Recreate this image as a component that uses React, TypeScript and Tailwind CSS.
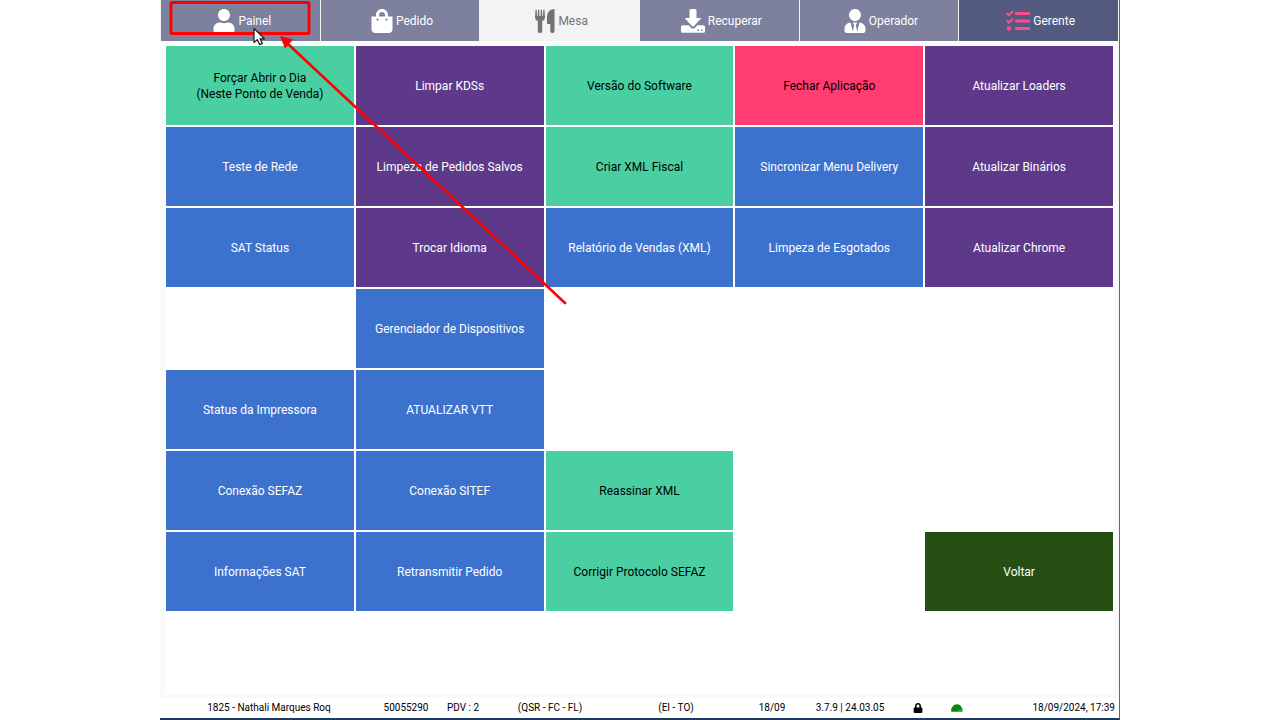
import type { ReactNode } from "react";
import { FaLock, FaShoppingBag, FaTasks, FaUser, FaUserTie } from "react-icons/fa";

function CutleryIcon() {
  return (
    <svg viewBox="0 0 20 24" className="h-6 w-5" fill="currentColor" aria-hidden="true">
      <path d="M0.5 1Q1 0 1.7 1L2 7H2.7L3 1Q3.7 0 4.2 1L4.4 7H5.6L5.8 1Q6.3 0 7 1L7.3 7H8L8.3 1Q9 0 9.5 1L10 8.5Q10 11 7.2 12V22.5Q7.2 24 5 24T2.8 22.5V12Q0 11 0 8.5Z" />
      <path d="M19.5 0.6V22.5Q19.5 24 17.5 24T15.3 22.5V15H12.6Q12 15 12 14.3V7Q12.6 1 18.8 0Q19.5 0 19.5 0.6Z" />
    </svg>
  );
}

function DownloadIcon() {
  return (
    <svg viewBox="0 0 24 24" className="size-6" fill="currentColor" aria-hidden="true">
      <path d="M10 0H14Q15.5 0 15.5 1.5V9H19.2Q20.6 9 19.6 10L12.8 17.2Q12 18 11.2 17.2L4.4 10Q3.4 9 4.8 9H8.5V1.5Q8.5 0 10 0Z" />
      <path
        fillRule="evenodd"
        d="M1.5 16.3H7.6L10.3 19Q12 20.5 13.7 19L16.4 16.3H22.5Q24 16.3 24 17.8V22.2Q24 23.7 22.5 23.7H1.5Q0 23.7 0 22.2V17.8Q0 16.3 1.5 16.3ZM16.5 20.5V22H18V20.5ZM19.8 20.5V22H21.3V20.5Z"
      />
    </svg>
  );
}

function DomeIcon() {
  return (
    <svg viewBox="0 0 12 8" className="h-2 w-3 text-[#008a12]" role="img" aria-label="Conectado">
      <path fill="currentColor" d="M0.5 7.8Q-0.4 5 1 3.4Q2.8 0.3 6 0.3Q9.3 0.3 10.6 3.4Q12.2 5.4 11.4 7.8Z" />
      <path stroke="#b9e2bd" strokeWidth="0.7" fill="none" d="M7.5 6l0.8 1.2M9.6 5.6l0.8 1.2" />
    </svg>
  );
}

type Tab = { label: string; icon: ReactNode; tone: string };

const tabs: Tab[] = [
  { label: "Painel", icon: <FaUser className="h-6 w-[22px]" />, tone: "bg-[#7d819d] text-white" },
  { label: "Pedido", icon: <FaShoppingBag className="h-6 w-[22px]" />, tone: "bg-[#7d819d] text-white" },
  { label: "Mesa", icon: <CutleryIcon />, tone: "bg-[#f3f3f3] text-[#737373]" },
  { label: "Recuperar", icon: <DownloadIcon />, tone: "bg-[#7d819d] text-white" },
  { label: "Operador", icon: <FaUserTie className="h-6 w-[22px]" />, tone: "bg-[#7d819d] text-white" },
  { label: "Gerente", icon: <FaTasks className="size-6 text-[#ff4b8b]" />, tone: "bg-[#525a80] text-white" },
];

const green = "bg-[#4acfa3] text-black";
const purple = "bg-[#5e398a] text-white";
const blue = "bg-[#3c72cd] text-white";
const pink = "bg-[#ff3d70] text-black";
const forest = "bg-[#274e13] text-white";

type Cell = [label: string, tone: string] | null;

const cells: Cell[] = [
  ["Forçar Abrir o Dia\n(Neste Ponto de Venda)", green],
  ["Limpar KDSs", purple],
  ["Versão do Software", green],
  ["Fechar Aplicação", pink],
  ["Atualizar Loaders", purple],
  ["Teste de Rede", blue],
  ["Limpeza de Pedidos Salvos", purple],
  ["Criar XML Fiscal", green],
  ["Sincronizar Menu Delivery", blue],
  ["Atualizar Binários", purple],
  ["SAT Status", blue],
  ["Trocar Idioma", purple],
  ["Relatório de Vendas (XML)", blue],
  ["Limpeza de Esgotados", blue],
  ["Atualizar Chrome", purple],
  null,
  ["Gerenciador de Dispositivos", blue],
  null,
  null,
  null,
  ["Status da Impressora", blue],
  ["ATUALIZAR VTT", blue],
  null,
  null,
  null,
  ["Conexão SEFAZ", blue],
  ["Conexão SITEF", blue],
  ["Reassinar XML", green],
  null,
  null,
  ["Informações SAT", blue],
  ["Retransmitir Pedido", blue],
  ["Corrigir Protocolo SEFAZ", green],
  null,
  ["Voltar", forest],
];

function Annotation() {
  return (
    <svg
      className="pointer-events-none absolute top-0 left-0"
      width="420"
      height="310"
      viewBox="0 0 420 310"
      aria-hidden="true"
    >
      <rect x="11" y="2.5" width="138" height="31" rx="1" fill="none" stroke="#ff0000" strokeWidth="3" />
      <path d="M128 44L405 303" stroke="#ff0000" strokeWidth="2.6" strokeLinecap="round" />
      <path d="M120 36L133 39.5L129.5 43.5L125 48.5Z" fill="#ff0000" />
      <path
        d="M94 28.5V42.5L97.2 39.6L99.8 44.6L102.4 43.4L100 38.8H104.4Z"
        fill="#fff"
        stroke="#1c1c24"
        strokeWidth="1.2"
        strokeLinejoin="round"
      />
    </svg>
  );
}

export default function App() {
  return (
    <div className="min-h-screen bg-white font-['Roboto',sans-serif] text-xs">
      <div className="relative mx-auto flex min-h-screen w-3/4 flex-col border-r border-b-2 border-r-[#4a6c9c] border-b-[#1c3a66] bg-white">
        <nav className="grid grid-cols-6 gap-px bg-[#f3f3f3] px-px">
          {tabs.map((tab) => (
            <button
              key={tab.label}
              type="button"
              className={`flex h-[41px] items-center justify-center gap-[3px] pl-1 whitespace-nowrap ${tab.tone}`}
            >
              {tab.icon}
              <span>{tab.label}</span>
            </button>
          ))}
        </nav>

        <main className="flex flex-1 flex-col border-x-5 border-y-4 border-[#fafafa]">
          <div className="grid flex-1 grid-cols-5 grid-rows-8 gap-0.5 bg-white px-px pt-px pb-0.5">
            {cells.map((cell, index) =>
              cell ? (
                <button key={cell[0]} type="button" className={`pt-px leading-4 whitespace-pre-line ${cell[1]}`}>
                  {cell[0]}
                </button>
              ) : (
                <div key={index} />
              ),
            )}
          </div>
        </main>

        <footer className="grid h-5 grid-cols-[218fr_56fr_58fr_116fr_136fr_56fr_100fr_36fr_42fr_141fr] items-center justify-items-center text-[10px] whitespace-nowrap text-black">
          <span>1825 - Nathali Marques Roq</span>
          <span>50055290</span>
          <span>PDV : 2</span>
          <span>(QSR - FC - FL)</span>
          <span>(EI - TO)</span>
          <span>18/09</span>
          <span>3.7.9 | 24.03.05</span>
          <FaLock className="size-2.5" role="img" aria-label="Bloqueado" />
          <DomeIcon />
          <span className="justify-self-end pr-1">18/09/2024, 17:39</span>
        </footer>

        <Annotation />
      </div>
    </div>
  );
}
